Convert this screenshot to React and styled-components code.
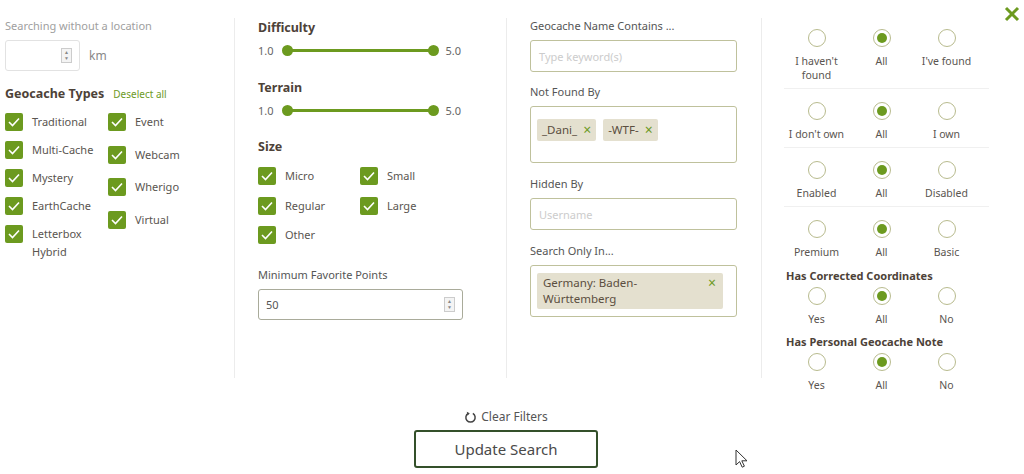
import React from "react";
import styled, { createGlobalStyle } from "styled-components";

const GREEN = "#6c9a1f";
const OLIVE = "#bfc19c";

const GlobalStyle = createGlobalStyle`
  body {
    margin: 0;
    background: #fff;
    font-family: "Noto Sans", "Open Sans", sans-serif;
    color: #555;
  }
`;

const Page = styled.div`
  position: relative;
  width: 1024px;
  height: 474px;
  overflow: hidden;
`;

const Columns = styled.div`
  display: flex;
  padding-top: 18px;
`;

const Column = styled.div`
  box-sizing: border-box;
  width: ${(p) => p.$width}px;
  padding-left: ${(p) => p.$pad}px;
  height: 360px;
  border-right: ${(p) => (p.$last ? "none" : "1px solid #ececec")};
`;

const Hint = styled.div`
  font-size: 11px;
  line-height: 16px;
  color: ${(p) => (p.$muted ? "#a0a0a0" : "#555")};
  margin-top: ${(p) => p.$top || 0}px;
`;

const Heading = styled.div`
  font-size: 12.5px;
  line-height: 18px;
  font-weight: 700;
  color: #4d4238;
  margin-top: ${(p) => p.$top || 0}px;
  display: flex;
  align-items: baseline;
  gap: 9px;
`;

const SmallLink = styled.span`
  font-size: 10px;
  font-weight: 400;
  color: ${GREEN};
`;

const DistanceRow = styled.div`
  display: flex;
  align-items: center;
  gap: 9px;
  margin-top: 6px;
  font-size: 12px;
  color: #888;
`;

const NumberBox = styled.div`
  box-sizing: border-box;
  width: ${(p) => p.$width}px;
  height: 31px;
  border: 1px solid ${(p) => p.$border || "#e2e2e2"};
  border-radius: 3px;
  display: flex;
  align-items: center;
  justify-content: space-between;
  padding: 0 7px 0 7px;
  font-size: 11px;
  color: #555;
  margin-top: ${(p) => p.$top || 0}px;
`;

const Spinner = styled.div`
  width: 11px;
  height: 15px;
  border: 1px solid #ccc;
  box-sizing: border-box;
  display: flex;
  flex-direction: column;
  align-items: center;
  justify-content: space-around;
  font-size: 5px;
  line-height: 5px;
  color: #888;
  background: #f4f4f4;
`;

const CheckGrid = styled.div`
  display: flex;
  margin-top: ${(p) => p.$top}px;
`;

const CheckCol = styled.div`
  display: flex;
  flex-direction: column;
  gap: ${(p) => p.$gap}px;
  width: ${(p) => p.$width}px;
`;

const CheckItem = styled.div`
  display: flex;
  align-items: flex-start;
  gap: 9px;
  font-size: 11px;
  line-height: 18px;
  color: #5a5550;
`;

const Box = styled.span`
  flex: none;
  width: 18px;
  height: 18px;
  border-radius: 2px;
  background: ${GREEN};
  display: flex;
  align-items: center;
  justify-content: center;
`;

const CheckLabel = styled.span`
  max-width: ${(p) => p.$max || 120}px;
`;

const SliderRow = styled.div`
  display: flex;
  align-items: center;
  height: 16px;
  margin-top: 5px;
  font-size: 11px;
  color: #666;
`;

const Track = styled.div`
  position: relative;
  width: 147px;
  height: 3px;
  background: ${GREEN};
  margin: 0 12px 0 13px;
`;

const Knob = styled.span`
  position: absolute;
  top: -4px;
  ${(p) => (p.$end ? "right: -5px;" : "left: -5px;")}
  width: 11px;
  height: 11px;
  border-radius: 50%;
  background: ${GREEN};
`;

const TextBox = styled.div`
  box-sizing: border-box;
  width: 207px;
  min-height: ${(p) => p.$height}px;
  border: 1px solid ${OLIVE};
  border-radius: 3px;
  padding: ${(p) => p.$pad || "0 8px"};
  display: flex;
  align-items: ${(p) => (p.$tags ? "flex-start" : "center")};
  flex-wrap: wrap;
  gap: 7px;
  margin-top: 6px;
  font-size: 11px;
  color: #ccc;
`;

const Tag = styled.span`
  display: inline-flex;
  align-items: flex-start;
  justify-content: space-between;
  gap: 6px;
  background: #e4e0cf;
  border-radius: 2px;
  padding: ${(p) => (p.$wide ? "2px 7px 2px 6px" : "3px 5px 3px 5px")};
  width: ${(p) => (p.$wide ? "186px" : "auto")};
  box-sizing: border-box;
  font-size: 11.5px;
  line-height: 16px;
  color: #5b4e40;
`;

const TagX = styled.span`
  color: ${GREEN};
  font-size: 14px;
  line-height: 16px;
`;

const RadioGroup = styled.div`
  width: 205px;
  padding-top: ${(p) => p.$top}px;
  padding-bottom: ${(p) => (p.$divided ? 6 : 0)}px;
  border-bottom: ${(p) => (p.$divided ? "1px solid #f0f0f0" : "none")};
`;

const RadioGrid = styled.div`
  display: grid;
  grid-template-columns: repeat(3, 65px);
`;

const RadioCell = styled.div`
  display: flex;
  flex-direction: column;
  align-items: center;
  text-align: center;
  font-size: 10.5px;
  line-height: 14px;
  color: #5a5550;
  gap: 7px;
`;

const Radio = styled.span`
  box-sizing: border-box;
  width: 18px;
  height: 18px;
  border-radius: 50%;
  border: 1.5px solid #b8bb8e;
  display: flex;
  align-items: center;
  justify-content: center;
  &::after {
    content: "";
    width: 10px;
    height: 10px;
    border-radius: 50%;
    background: ${(p) => (p.$on ? GREEN : "transparent")};
  }
`;

const SubHeading = styled.div`
  font-size: 11px;
  line-height: 14px;
  font-weight: 700;
  color: #4d4238;
  margin-top: ${(p) => p.$top}px;
  margin-left: 2px;
`;

const Footer = styled.div`
  display: flex;
  flex-direction: column;
  align-items: center;
  padding-right: 12px;
  margin-top: 31px;
`;

const ClearLink = styled.div`
  display: flex;
  align-items: center;
  gap: 4px;
  font-size: 12px;
  color: #555;
  line-height: 16px;
`;

const UpdateButton = styled.button`
  margin-top: 5px;
  width: 184px;
  height: 38px;
  border: 2px solid #34502a;
  border-radius: 3px;
  background: #fff;
  font-family: "Noto Sans", "Open Sans", sans-serif;
  font-size: 15px;
  color: #4a4a4a;
`;

const Close = styled.div`
  position: absolute;
  top: 5px;
  right: 4px;
`;

const Cursor = styled.div`
  position: absolute;
  left: 735px;
  top: 449px;
`;

const Check = () => (
  <Box>
    <svg width="12" height="10" viewBox="0 0 12 10">
      <path d="M1 5l3.5 3.5L11 1.5" fill="none" stroke="#fff" strokeWidth="1.6" />
    </svg>
  </Box>
);

const CheckOption = ({ label, max }) => (
  <CheckItem>
    <Check />
    <CheckLabel $max={max}>{label}</CheckLabel>
  </CheckItem>
);

const Slider = () => (
  <SliderRow>
    1.0
    <Track>
      <Knob />
      <Knob $end />
    </Track>
    5.0
  </SliderRow>
);

const RadioRow = ({ labels, top, divided }) => (
  <RadioGroup $top={top} $divided={divided}>
    <RadioGrid>
      {labels.map((l, i) => (
        <RadioCell key={l + i}>
          <Radio $on={i === 1} />
          <span>{l}</span>
        </RadioCell>
      ))}
    </RadioGrid>
  </RadioGroup>
);

export default function App() {
  return (
    <Page>
      <GlobalStyle />
      <Columns>
        <Column $width={235} $pad={5}>
          <Hint $muted>Searching without a location</Hint>
          <DistanceRow>
            <NumberBox $width={75}>
              <span />
              <Spinner>
                <span>▲</span>
                <span>▼</span>
              </Spinner>
            </NumberBox>
            km
          </DistanceRow>
          <Heading $top={14}>
            Geocache Types <SmallLink>Deselect all</SmallLink>
          </Heading>
          <CheckGrid $top={10}>
            <CheckCol $gap={10} $width={103}>
              <CheckOption label="Traditional" />
              <CheckOption label="Multi-Cache" />
              <CheckOption label="Mystery" />
              <CheckOption label="EarthCache" />
              <CheckOption label="Letterbox Hybrid" max={70} />
            </CheckCol>
            <CheckCol $gap={14.5} $width={110}>
              <CheckOption label="Event" />
              <CheckOption label="Webcam" />
              <CheckOption label="Wherigo" />
              <CheckOption label="Virtual" />
            </CheckCol>
          </CheckGrid>
        </Column>

        <Column $width={272} $pad={23}>
          <Heading $top={1}>Difficulty</Heading>
          <Slider />
          <Heading $top={21}>Terrain</Heading>
          <Slider />
          <Heading $top={20}>Size</Heading>
          <CheckGrid $top={11}>
            <CheckCol $gap={11.5} $width={102}>
              <CheckOption label="Micro" />
              <CheckOption label="Regular" />
              <CheckOption label="Other" />
            </CheckCol>
            <CheckCol $gap={11.5} $width={100}>
              <CheckOption label="Small" />
              <CheckOption label="Large" />
            </CheckCol>
          </CheckGrid>
          <Hint $top={23}>Minimum Favorite Points</Hint>
          <NumberBox $width={205} $border="#a9ab9a" $top={6}>
            <span>50</span>
            <Spinner>
              <span>▲</span>
              <span>▼</span>
            </Spinner>
          </NumberBox>
        </Column>

        <Column $width={255} $pad={23}>
          <Hint>Geocache Name Contains ...</Hint>
          <TextBox $height={32}>Type keyword(s)</TextBox>
          <Hint $top={12}>Not Found By</Hint>
          <TextBox $height={57} $tags $pad="12px 6px">
            <Tag>
              _Dani_ <TagX>×</TagX>
            </Tag>
            <Tag>
              -WTF- <TagX>×</TagX>
            </Tag>
          </TextBox>
          <Hint $top={13}>Hidden By</Hint>
          <TextBox $height={32}>Username</TextBox>
          <Hint $top={13}>Search Only In...</Hint>
          <TextBox $height={52} $tags $pad="7px 6px">
            <Tag $wide>
              <span>
                Germany: Baden-
                <br />
                Württemberg
              </span>
              <TagX>×</TagX>
            </Tag>
          </TextBox>
        </Column>

        <Column $width={262} $pad={22} $last>
          <RadioRow labels={["I haven't found", "All", "I've found"]} top={11} divided />
          <RadioRow labels={["I don't own", "All", "I own"]} top={13} divided />
          <RadioRow labels={["Enabled", "All", "Disabled"]} top={13} divided />
          <RadioRow labels={["Premium", "All", "Basic"]} top={13} />
          <SubHeading $top={10}>Has Corrected Coordinates</SubHeading>
          <RadioRow labels={["Yes", "All", "No"]} top={4} />
          <SubHeading $top={9}>Has Personal Geocache Note</SubHeading>
          <RadioRow labels={["Yes", "All", "No"]} top={4} />
        </Column>
      </Columns>

      <Footer>
        <ClearLink>
          <svg width="13" height="13" viewBox="0 0 14 14">
            <path
              d="M9.5 2.6A5 5 0 1 1 4.5 2.6"
              fill="none"
              stroke="#444"
              strokeWidth="1.6"
            />
            <path d="M3 0.8L6.2 2.4L3.8 5z" fill="#444" />
          </svg>
          Clear Filters
        </ClearLink>
        <UpdateButton>Update Search</UpdateButton>
      </Footer>

      <Close>
        <svg width="16" height="16" viewBox="0 0 16 16">
          <path d="M2 2l12 12M14 2L2 14" stroke={GREEN} strokeWidth="3" />
        </svg>
      </Close>

      <Cursor>
        <svg width="13" height="19" viewBox="0 0 13 19">
          <path
            d="M1 1v15l3.6-3.4 2.6 5.6 2.2-1-2.6-5.4H12z"
            fill="#fff"
            stroke="#333"
            strokeWidth="1"
          />
        </svg>
      </Cursor>
    </Page>
  );
}
